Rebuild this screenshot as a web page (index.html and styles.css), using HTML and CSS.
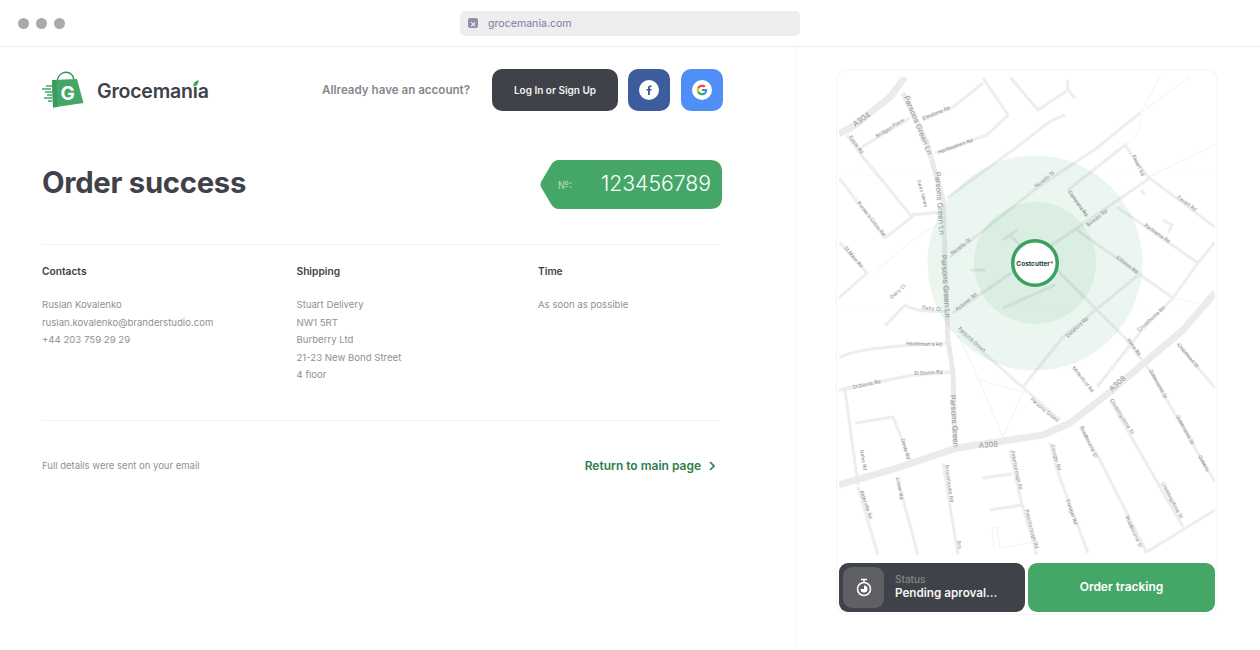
FILE: index.html
```html
<!DOCTYPE html>
<html lang="en">
<head>
    <meta charset="UTF-8">
    <meta name="viewport" content="width=device-width, initial-scale=1.0">
    <title>Order success | Grocemania</title>
    <link rel="stylesheet" href="styles.css">
</head>
<body>

    <div class="browser-bar">
        <div class="dots"><span></span><span></span><span></span></div>
        <div class="url-bar">
            <span class="url-icon">&times;</span>
            <span>grocemania.com</span>
        </div>
    </div>

    <div class="page">
        <div class="left">
            <div class="header">
                <div class="logo">
                    <svg class="logo-bag" width="42" height="38" viewBox="42 71 42 38">
                        <path class="bag-handle" d="M57 83 C57 69 74 69 74 81"/>
                        <path class="bag-body" d="M52 80 L77 79 L83.500 103 L53 107.500 Z"/>
                        <path class="bag-fold" d="M52 80 L56 80 L58 106.800 L53 107.500 Z"/>
                        <path class="bag-lines" d="M46 86 H52 M42 89 H51 M45 92 H52 M47 95 H52 M44 98 H52 M48 101 H52"/>
                        <text class="bag-letter" x="60.500" y="100">G</text>
                    </svg>
                    <span class="logo-text">Groceman<span class="logo-i">i<svg class="logo-leaf" width="6" height="7" viewBox="0 0 6 7"><path d="M0.500 6.500 C0 3 2 1 5.500 0 C6 3 4.500 6 0.500 6.500 Z"/></svg></span>a</span>
                </div>
                <div class="account">
                    <span class="account-text">Allready have an account?</span>
                    <button class="login-btn">Log In or Sign Up</button>
                    <button class="social-btn fb">
                        <svg width="20" height="20" viewBox="0 0 20 20">
                            <circle cx="10" cy="10" r="10" fill="#fff"/>
                            <path fill="#3d5c9c" d="M10.900 15 V10.600 H12.400 L12.600 8.900 H10.900 V7.900 C10.900 7.400 11.100 7.100 11.800 7.100 H12.700 V5.500 C12.500 5.500 12 5.400 11.300 5.400 C9.900 5.400 9 6.300 9 7.700 V8.900 H7.500 V10.600 H9 V15 Z"/>
                        </svg>
                    </button>
                    <button class="social-btn google">
                        <svg width="20" height="20" viewBox="0 0 20 20">
                            <circle cx="10" cy="10" r="10" fill="#fff"/>
                            <path fill="#4285f4" d="M15.200 10.100 C15.200 9.700 15.200 9.400 15.100 9 H10 V11 H13 C12.800 11.700 12.500 12.200 12 12.600 L13.700 13.900 C14.700 13 15.200 11.700 15.200 10.100 Z"/>
                            <path fill="#34a853" d="M10 15.300 C11.500 15.300 12.700 14.800 13.700 13.900 L12 12.600 C11.500 13 10.800 13.200 10 13.200 C8.600 13.200 7.400 12.200 7 11 L5.300 12.300 C6.100 14.100 7.900 15.300 10 15.300 Z"/>
                            <path fill="#fbbc05" d="M7 11 C6.800 10.400 6.800 9.600 7 9 L5.300 7.700 C4.500 9.100 4.500 10.900 5.300 12.300 Z"/>
                            <path fill="#ea4335" d="M10 6.800 C10.800 6.800 11.500 7.100 12.100 7.600 L13.700 6.100 C12.700 5.200 11.500 4.700 10 4.700 C7.900 4.700 6.100 5.900 5.300 7.700 L7 9 C7.400 7.700 8.600 6.800 10 6.800 Z"/>
                        </svg>
                    </button>
                </div>
            </div>

            <div class="title-row">
                <h1>Order success</h1>
                <div class="order-tag">
                    <span class="order-label">№:</span>
                    <span class="order-number">123456789</span>
                </div>
            </div>

            <div class="details">
                <div class="col-contacts">
                    <h3>Contacts</h3>
                    <p>Ruslan Kovalenko</p>
                    <p>ruslan.kovalenko@branderstudio.com</p>
                    <p>+44 203 759 29 29</p>
                </div>
                <div class="col-shipping">
                    <h3>Shipping</h3>
                    <p>Stuart Delivery</p>
                    <p>NW1 5RT</p>
                    <p>Burberry Ltd</p>
                    <p>21-23 New Bond Street</p>
                    <p>4 floor</p>
                </div>
                <div class="col-time">
                    <h3>Time</h3>
                    <p>As soon as possible</p>
                </div>
            </div>

            <div class="footer-row">
                <span class="footer-note">Full details were sent on your email</span>
                <a class="return-link" href="#">Return to main page
                    <svg width="6" height="10" viewBox="0 0 6 10"><path d="M1 1 L5 5 L1 9"/></svg>
                </a>
            </div>
        </div>

        <div class="right">
            <div class="map-card">
                <svg class="map" width="376" height="479" viewBox="839 77 376 479">
                    <g class="road-thin">
                        <path d="M1140 113 L1190 77"/>
                        <path d="M1125 145 C1140 135 1142 125 1140 113 L1160 77"/>
                        <path d="M1148 177 L1215 145"/>
                        <path d="M1173 298 L1205 305"/>
                        <path d="M979 380 L1023 392 L1003 437 L979 380 L958 335"/>
                        <path d="M873 275 C905 245 925 228 947 222"/>
                        <path d="M839 175 H1215" opacity="0.300"/>
                        <path d="M839 307 H1215" opacity="0.300"/>
                        <path d="M994 548 L992 528 L997 527 L1000 548 L1038 541"/>
                    </g>
                    <g class="road-small">
                        <path d="M862 147 L910 118"/>
                        <path d="M847 135 L863 157 L912 217 L885 238"/>
                        <path d="M839 178 L885 238"/>
                        <path d="M839 242 L867 273 L839 298"/>
                        <path d="M912 215 L940 212"/>
                        <path d="M923 120 L953 107 L983 83"/>
                        <path d="M935 153 L987 135 L1008 115 L983 78"/>
                        <path d="M1010 77 L1038 110 L1068 90 L1067 80 M1068 90 L1075 98"/>
                        <path d="M947 198 L1017 147 L1052 120 L1065 115"/>
                        <path d="M950 257 L1037 188 L1097 148 L1140 113"/>
                        <path d="M1068 190 L1125 145 L1148 177 L1215 227"/>
                        <path d="M1068 190 L1088 217"/>
                        <path d="M1077 230 L1173 298"/>
                        <path d="M953 313 L1150 178"/>
                        <path d="M1117 207 L1198 263"/>
                        <path d="M1057 270 L1127 340 L1148 368"/>
                        <path d="M958 330 L1020 385 L1060 420"/>
                        <path d="M1138 275 L1063 337 L1023 387"/>
                        <path d="M1097 387 L1142 330 L1173 298 L1198 263 L1215 242"/>
                        <path d="M1148 368 L1215 482"/>
                        <path d="M1177 343 L1215 388"/>
                        <path d="M1110 400 L1183 527"/>
                        <path d="M1145 553 L1215 510"/>
                        <path d="M1080 427 L1100 460 L1147 553"/>
                        <path d="M1050 443 L1057 470 L1088 553"/>
                        <path d="M1010 450 L1020 497 L1037 555"/>
                        <path d="M982 478 L1012 474 M990 510 L1022 505"/>
                        <path d="M943 463 L958 555"/>
                        <path d="M897 477 L918 555"/>
                        <path d="M858 487 L878 555"/>
                        <path d="M845 390 L858 485"/>
                        <path d="M855 423 L893 417 L910 460"/>
                        <path d="M839 358 C850 351 873 347 947 343"/>
                        <path d="M905 305 L885 326 M905 305 C915 312 935 312 948 311"/>
                        <path d="M1003 240 L1017 230 M1010 235 L1030 255 M970 270 L985 270 M1003 308 L1055 285"/>
                        <path d="M1141 190 L1145 195 M1163 220 L1172 225 L1168 233"/>
                    </g>
                    <g class="road-mid">
                        <path d="M839 390 L913 375 L953 372"/>
                    </g>
                    <g class="road-main">
                        <path d="M903 93 L927 143 L943 200 L945 260 L948 340 L953 373 L955 445"/>
                    </g>
                    <g class="road-big">
                        <path d="M839 134 L855 125 L890 97 L905 77"/>
                        <path d="M839 485 L897 468 L957 448 L1043 435 L1070 423 L1110 392 L1183 330 L1215 293"/>
                    </g>

                    <g class="map-labels">
                        <text class="label-big" transform="translate(855 127) rotate(-35)">A304</text>
                        <text class="label-big" transform="translate(904 97) rotate(68)">Parsons Green Ln</text>
                        <text class="label-big" transform="translate(935 172) rotate(86)">Parsons Green Ln</text>
                        <text class="label-big" transform="translate(941 255) rotate(86)">Parsons Green Ln</text>
                        <text class="label-big" transform="translate(950 395) rotate(86)">Parsons Green</text>
                        <text class="label-big" transform="translate(979 448) rotate(-4)">A308</text>
                        <text class="label-big" transform="translate(1112 392) rotate(-43)">A308</text>
                        <text transform="translate(877 138) rotate(-32)">Bridges Place</text>
                        <text transform="translate(923 120) rotate(-22)">Elmstone Rd</text>
                        <text transform="translate(939 154) rotate(-20)">Harbledown Rd</text>
                        <text transform="translate(849 137) rotate(55)">Epple Rd</text>
                        <text transform="translate(917 180) rotate(75)">Swan Mews</text>
                        <text transform="translate(857 203) rotate(52)">Purser's Cross Rd</text>
                        <text transform="translate(844 248) rotate(50)">St Maur Rd</text>
                        <text transform="translate(1036 188) rotate(-38)">Novello St</text>
                        <text transform="translate(952 255) rotate(-37)">Novello St</text>
                        <text transform="translate(1068 192) rotate(55)">Campana Rd</text>
                        <text transform="translate(1088 227) rotate(-38)">Balsato Rd</text>
                        <text transform="translate(1132 156) rotate(65)">Favart Rd</text>
                        <text transform="translate(1177 198) rotate(37)">Favart Rd</text>
                        <text transform="translate(1144 226) rotate(35)">Parthenia Rd</text>
                        <text transform="translate(1116 258) rotate(38)">Elthiron Rd</text>
                        <text transform="translate(957 311) rotate(-38)">Ackmar Rd</text>
                        <text transform="translate(892 299) rotate(-42)">Dairy Cl</text>
                        <text transform="translate(922 309) rotate(6)">Dairy Cl</text>
                        <text transform="translate(958 329) rotate(42)">Parsons Green</text>
                        <text transform="translate(1068 338) rotate(-42)">Delaford Rd</text>
                        <text transform="translate(1139 332) rotate(-42)">Crowthorne Rd</text>
                        <text transform="translate(1127 340) rotate(55)">Irene Rd</text>
                        <text transform="translate(906 345) rotate(2)">Heathman's Rd</text>
                        <text transform="translate(914 375) rotate(-3)">St Dionis Rd</text>
                        <text transform="translate(853 389) rotate(-12)">St Dionis Rd</text>
                        <text transform="translate(1030 400) rotate(40)">Parsons Green</text>
                        <text transform="translate(1072 368) rotate(52)">Molesford Rd</text>
                        <text transform="translate(1177 345) rotate(50)">Chipstead St</text>
                        <text transform="translate(1149 370) rotate(62)">Queensmill St</text>
                        <text transform="translate(1176 416) rotate(62)">Queensmill St</text>
                        <text transform="translate(1198 456) rotate(62)">Queens</text>
                        <text transform="translate(1110 400) rotate(58)">Chiddingstone St</text>
                        <text transform="translate(1161 483) rotate(62)">Chiddingstone St</text>
                        <text transform="translate(1080 427) rotate(65)">Bradbourne St</text>
                        <text transform="translate(1125 517) rotate(65)">Bradbourne St</text>
                        <text transform="translate(1051 445) rotate(75)">Coniger Rd</text>
                        <text transform="translate(1066 500) rotate(72)">Coniger Rd</text>
                        <text transform="translate(1011 451) rotate(78)">Peterborough Rd</text>
                        <text transform="translate(1025 510) rotate(75)">Peterborough Rd</text>
                        <text transform="translate(945 465) rotate(82)">Broomhouse Rd</text>
                        <text transform="translate(957 541) rotate(82)">Bro</text>
                        <text transform="translate(896 478) rotate(80)">Linver Rd</text>
                        <text transform="translate(860 450) rotate(80)">Gales Rd</text>
                        <text transform="translate(901 439) rotate(75)">Dents Rd</text>
                        <text transform="translate(860 491) rotate(72)">Alderville Rd</text>
                    </g>

                    <circle class="zone" cx="1035" cy="263" r="107.500"/>
                    <circle class="zone" cx="1035" cy="263" r="61"/>
                    <circle class="pin" cx="1035" cy="263" r="22.300"/>
                    <text class="pin-label" x="1035" y="265.500">Costcutter<tspan class="pin-dot">*</tspan></text>
                </svg>

                <div class="map-actions">
                    <div class="status-box">
                        <div class="status-icon">
                            <svg width="16" height="20" viewBox="0 0 16 20">
                                <path class="timer-top" d="M5 1.500 H11 M8 1.500 V4"/>
                                <circle class="timer-ring" cx="8" cy="11" r="6.500"/>
                                <path class="timer-fill" d="M8 7.500 A3.500 3.500 0 1 1 4.500 11 L8 11 Z"/>
                            </svg>
                        </div>
                        <div class="status-text">
                            <span class="status-label">Status</span>
                            <span class="status-value">Pending aproval...</span>
                        </div>
                    </div>
                    <button class="track-btn">Order tracking</button>
                </div>
            </div>
        </div>
    </div>

</body>
</html>
```

FILE: styles.css
```css
* {
    margin: 0;
    padding: 0;
    box-sizing: border-box;
    font-family: 'Inter', 'Liberation Sans', sans-serif;
}
body {
    background: white;
    height: 650px;
    overflow: hidden;
}
.browser-bar {
    height: 47px;
    border-bottom: 1px solid #eeeef3;
    display: flex;
    align-items: center;
    justify-content: center;
    position: relative;
}
.dots {
    position: absolute;
    left: 18px;
    top: 18px;
    display: flex;
    gap: 7px;
}
.dots span {
    width: 11px;
    height: 11px;
    border-radius: 50%;
    background: #a9a9ae;
}
.url-bar {
    width: 340px;
    height: 25px;
    background: #eeeef1;
    border-radius: 5px;
    padding-left: 8px;
    display: flex;
    align-items: center;
    gap: 10px;
    font-size: 10.600px;
    color: #7b7d9b;
}
.url-icon {
    width: 10px;
    height: 10px;
    background: #8f91ab;
    border-radius: 2px;
    color: white;
    font-size: 10px;
    line-height: 10px;
    text-align: center;
}
.page {
    display: flex;
    height: 603px;
}
.left {
    width: 796px;
    border-right: 1px solid #f5f5f7;
    padding: 22px 73px 0 42px;
}
.header {
    display: flex;
    justify-content: space-between;
    align-items: center;
    height: 42px;
    margin-right: -1px;
}
.logo {
    display: flex;
    align-items: center;
    gap: 13px;
}
.logo-text {
    font-size: 19.500px;
    font-weight: 600;
    color: #3f4248;
    letter-spacing: -0.200px;
    margin-top: 1px;
}
.logo-i {
    position: relative;
}
.logo-leaf {
    position: absolute;
    left: 0;
    top: 1px;
    fill: #44a768;
}
.bag-handle {
    fill: none;
    stroke: #3d8c5a;
    stroke-width: 1.300;
}
.bag-body {
    fill: #44a768;
}
.bag-fold {
    fill: #3b9a5d;
}
.bag-lines {
    fill: none;
    stroke: #44a768;
    stroke-width: 1.500;
}
.bag-letter {
    font-size: 19px;
    font-weight: 700;
    fill: white;
}
.account {
    display: flex;
    align-items: center;
}
.account-text {
    font-size: 11.600px;
    font-weight: 600;
    color: #85878c;
    margin-right: 22px;
}
.login-btn {
    width: 126px;
    height: 42px;
    background: #3f4248;
    color: #f2f2f3;
    border: none;
    border-radius: 10px;
    font-size: 10px;
    font-weight: 600;
    margin-right: 10px;
}
.social-btn {
    width: 42px;
    height: 42px;
    border: none;
    border-radius: 10px;
    display: flex;
    align-items: center;
    justify-content: center;
}
.fb {
    background: #3d5c9c;
    margin-right: 11px;
}
.google {
    background: #4f8ff7;
}
.title-row {
    display: flex;
    justify-content: space-between;
    align-items: center;
    margin-top: 49px;
    height: 49px;
}
h1 {
    font-size: 29.300px;
    font-weight: 700;
    color: #3f4248;
    letter-spacing: -0.300px;
    margin-bottom: 5px;
}
.order-tag {
    width: 182px;
    height: 49px;
    background: #44a768;
    clip-path: path('M19 0 H170 Q182 0 182 12 V37 Q182 49 170 49 H19 Q14 49 11 44 L1 27 Q0 24.500 1 22 L11 5 Q14 0 19 0 Z');
    display: flex;
    justify-content: space-between;
    align-items: center;
    padding: 0 11px 3px 18px;
}
.order-label {
    font-size: 10px;
    font-weight: 600;
    color: #a7d6b7;
    margin-top: 3px;
}
.order-number {
    font-size: 21.200px;
    font-weight: 300;
    color: white;
}
.details {
    display: grid;
    grid-template-columns: 254.500px 241.500px 1fr;
    margin-top: 35px;
    margin-right: 2px;
    height: 177px;
    border-top: 1px solid #f3f3f5;
    border-bottom: 1px solid #f3f3f5;
    padding-top: 19px;
}
.details h3 {
    font-size: 10.200px;
    font-weight: 600;
    color: #3f4248;
    line-height: 14px;
    margin-bottom: 18px;
}
.details p {
    font-size: 9.600px;
    line-height: 17.500px;
    color: #8f9095;
}
.footer-row {
    display: flex;
    justify-content: space-between;
    align-items: center;
    margin-top: 37px;
    margin-right: 7px;
}
.footer-note {
    font-size: 9.500px;
    color: #8f9095;
}
.return-link {
    display: flex;
    align-items: center;
    gap: 8px;
    font-size: 12px;
    font-weight: 600;
    color: #2f7d4c;
    text-decoration: none;
}
.return-link svg {
    fill: none;
    stroke: #2f7d4c;
    stroke-width: 1.600;
}
.right {
    flex: 1;
    padding: 22px 42px 0 40px;
}
.map-card {
    width: 382px;
    height: 546px;
    border: 1px solid #f4f4f6;
    border-radius: 12px;
    padding: 7px 2px 2px;
}
.map {
    display: block;
}
.road-thin path {
    fill: none;
    stroke: #efeff2;
    stroke-width: 0.800;
}
.road-small path {
    fill: none;
    stroke: #eeeef0;
    stroke-width: 3;
}
.road-mid path {
    fill: none;
    stroke: #eeeef0;
    stroke-width: 3.500;
}
.road-main path {
    fill: none;
    stroke: #e9e9ec;
    stroke-width: 5;
}
.road-big path {
    fill: none;
    stroke: #ebebee;
    stroke-width: 7;
}
.map-labels text {
    font-size: 5px;
    fill: #84858b;
}
.map-labels .label-big {
    font-size: 7.500px;
    fill: #96979c;
}
.zone {
    fill: #44a768;
    opacity: 0.100;
}
.pin {
    fill: white;
    stroke: #3aa25f;
    stroke-width: 3.500;
}
.pin-label {
    font-size: 6.500px;
    font-weight: 700;
    fill: #1f3f33;
    text-anchor: middle;
}
.pin-dot {
    fill: #c0434b;
}
.map-actions {
    display: flex;
    gap: 3px;
    margin-top: 7px;
}
.status-box {
    width: 186px;
    height: 49px;
    background: #3f4248;
    border-radius: 9px;
    display: flex;
    align-items: center;
    padding-left: 4px;
    gap: 11px;
}
.status-icon {
    width: 41px;
    height: 41px;
    background: #5e6065;
    border-radius: 9px;
    display: flex;
    align-items: center;
    justify-content: center;
}
.timer-top {
    fill: none;
    stroke: white;
    stroke-width: 1.500;
}
.timer-ring {
    fill: none;
    stroke: white;
    stroke-width: 1.500;
}
.timer-fill {
    fill: white;
}
.status-text {
    display: flex;
    flex-direction: column;
    padding-bottom: 2px;
}
.status-label {
    font-size: 10px;
    font-weight: 500;
    line-height: 13px;
    color: #85878c;
}
.status-value {
    font-size: 11.700px;
    font-weight: 600;
    line-height: 15px;
    color: #f5f5f5;
}
.track-btn {
    width: 187px;
    height: 49px;
    background: #44a768;
    color: white;
    border: none;
    border-radius: 9px;
    font-size: 12px;
    font-weight: 600;
    padding-bottom: 2px;
}
```
